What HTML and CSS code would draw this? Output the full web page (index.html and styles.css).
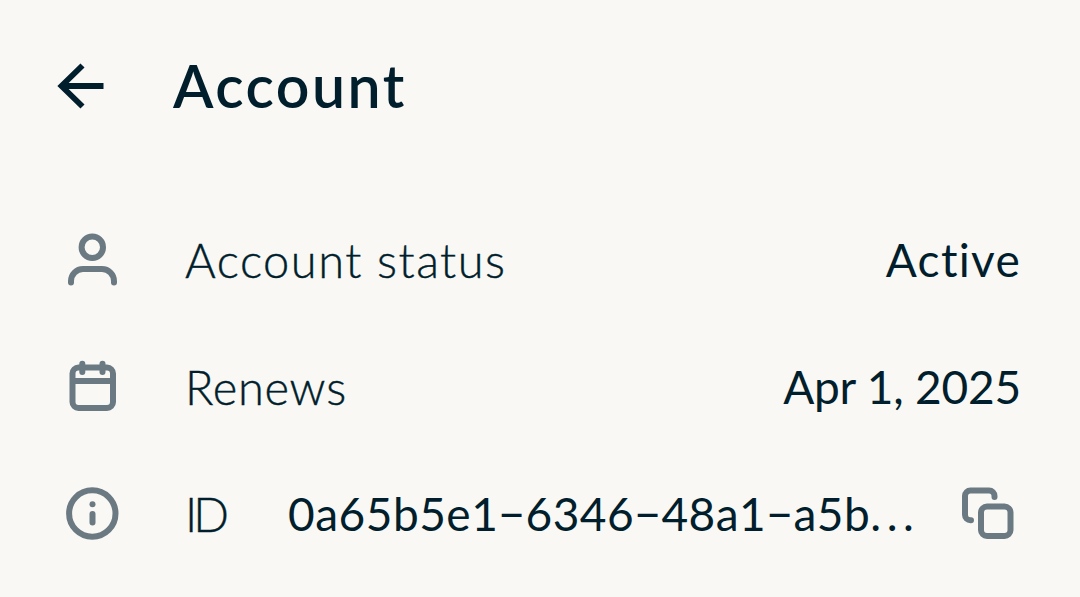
FILE: index.html
```html
<!DOCTYPE html>
<html lang="en">
<head>
  <meta charset="UTF-8">
  <meta name="viewport" content="width=device-width, initial-scale=1.0">
  <title>Account</title>
  <link rel="stylesheet" href="styles.css">
</head>
<body>
  <!-- Top bar -->
  <header class="topbar">
    <svg class="back" viewBox="0 0 48 48"><path d="M46.500 23H4M25.500 2.500L4.500 23L25.500 43.500"/></svg>
    <h1 class="title">Account</h1>
  </header>

  <!-- Account details -->
  <main class="list">
    <div class="row">
      <svg class="icon" viewBox="0 0 54 54"><circle cx="27.300" cy="14.300" r="10.700"/><path d="M6 49.500V48A12 12 0 0 1 18 36H37A12 12 0 0 1 49 48V49.500"/></svg>
      <span class="label status">Account status</span>
      <span class="value active">Active</span>
    </div>
    <div class="row">
      <svg class="icon" viewBox="0 0 54 54"><rect x="7.500" y="7.500" width="40.500" height="40.500" rx="6"/><path d="M8 21H48M17.300 3.800V12M37.500 3.800V12"/></svg>
      <span class="label renews">Renews</span>
      <span class="value date">Apr 1, 2025</span>
    </div>
    <div class="row">
      <svg class="icon" viewBox="0 0 54 54"><circle cx="27.300" cy="26.500" r="23.200"/><path d="M27.500 27V35.500"/><circle class="dot" cx="27.500" cy="17.300" r="3"/></svg>
      <span class="label id">ID</span>
      <span class="value uuid">0a65b5e1−6346−48a1−a5b<span class="dots">...</span></span>
      <svg class="icon copy" viewBox="0 0 54 54"><rect x="21" y="19.500" width="29.500" height="29.500" rx="6"/><path d="M11 33.200H10.500A5.500 5.500 0 0 1 5 27.700V9A5.500 5.500 0 0 1 10.500 3.500H29A5.500 5.500 0 0 1 34.500 9V10"/></svg>
    </div>
  </main>
</body>
</html>
```
FILE: styles.css
```css
body {
  margin: 0;
  background-color: #f9f8f4;
  color: #011e2c;
  font-family: "Lato", sans-serif;
  font-variant-ligatures: none;
}
/* Top bar */
.topbar {
  display: flex;
  align-items: center;
  height: 174px;
  padding-left: 57px;
}
.back {
  width: 48px;
  height: 48px;
  margin-right: 68px;
  fill: none;
  stroke: #011e2c;
  stroke-width: 5.8;
}
.title {
  margin: 0;
  padding-bottom: 3px;
  font-size: 59px;
  font-weight: 600;
  letter-spacing: 2.5px;
}
/* Rows */
.list {
  padding: 22.5px 59px 0 65px;
}
.row {
  display: flex;
  align-items: center;
  height: 127px;
}
.icon {
  width: 54px;
  height: 54px;
  flex: none;
  fill: none;
  stroke: #6b7a82;
  stroke-width: 6;
  stroke-linecap: round;
}
.dot {
  fill: #6b7a82;
  stroke: none;
}
.copy {
  margin-left: auto;
  margin-right: 7px;
}
.label,
.value {
  padding-bottom: 1px;
  font-size: 46px;
  white-space: nowrap;
}
.label {
  margin-left: 66px;
  font-size: 47px;
  font-weight: 300;
  -webkit-text-stroke: 0.4px #011e2c;
}
.value {
  margin-left: auto;
}
/* Tracking per text */
.status {
  letter-spacing: 1.5px;
}
.renews {
  letter-spacing: 0.7px;
}
.id {
  width: 45px;
  letter-spacing: -4px;
}
.active {
  letter-spacing: 1.3px;
}
.date {
  letter-spacing: -0.2px;
}
.uuid {
  margin-left: 58px;
  letter-spacing: 0.5px;
}
.dots {
  letter-spacing: 5.5px;
}
```
